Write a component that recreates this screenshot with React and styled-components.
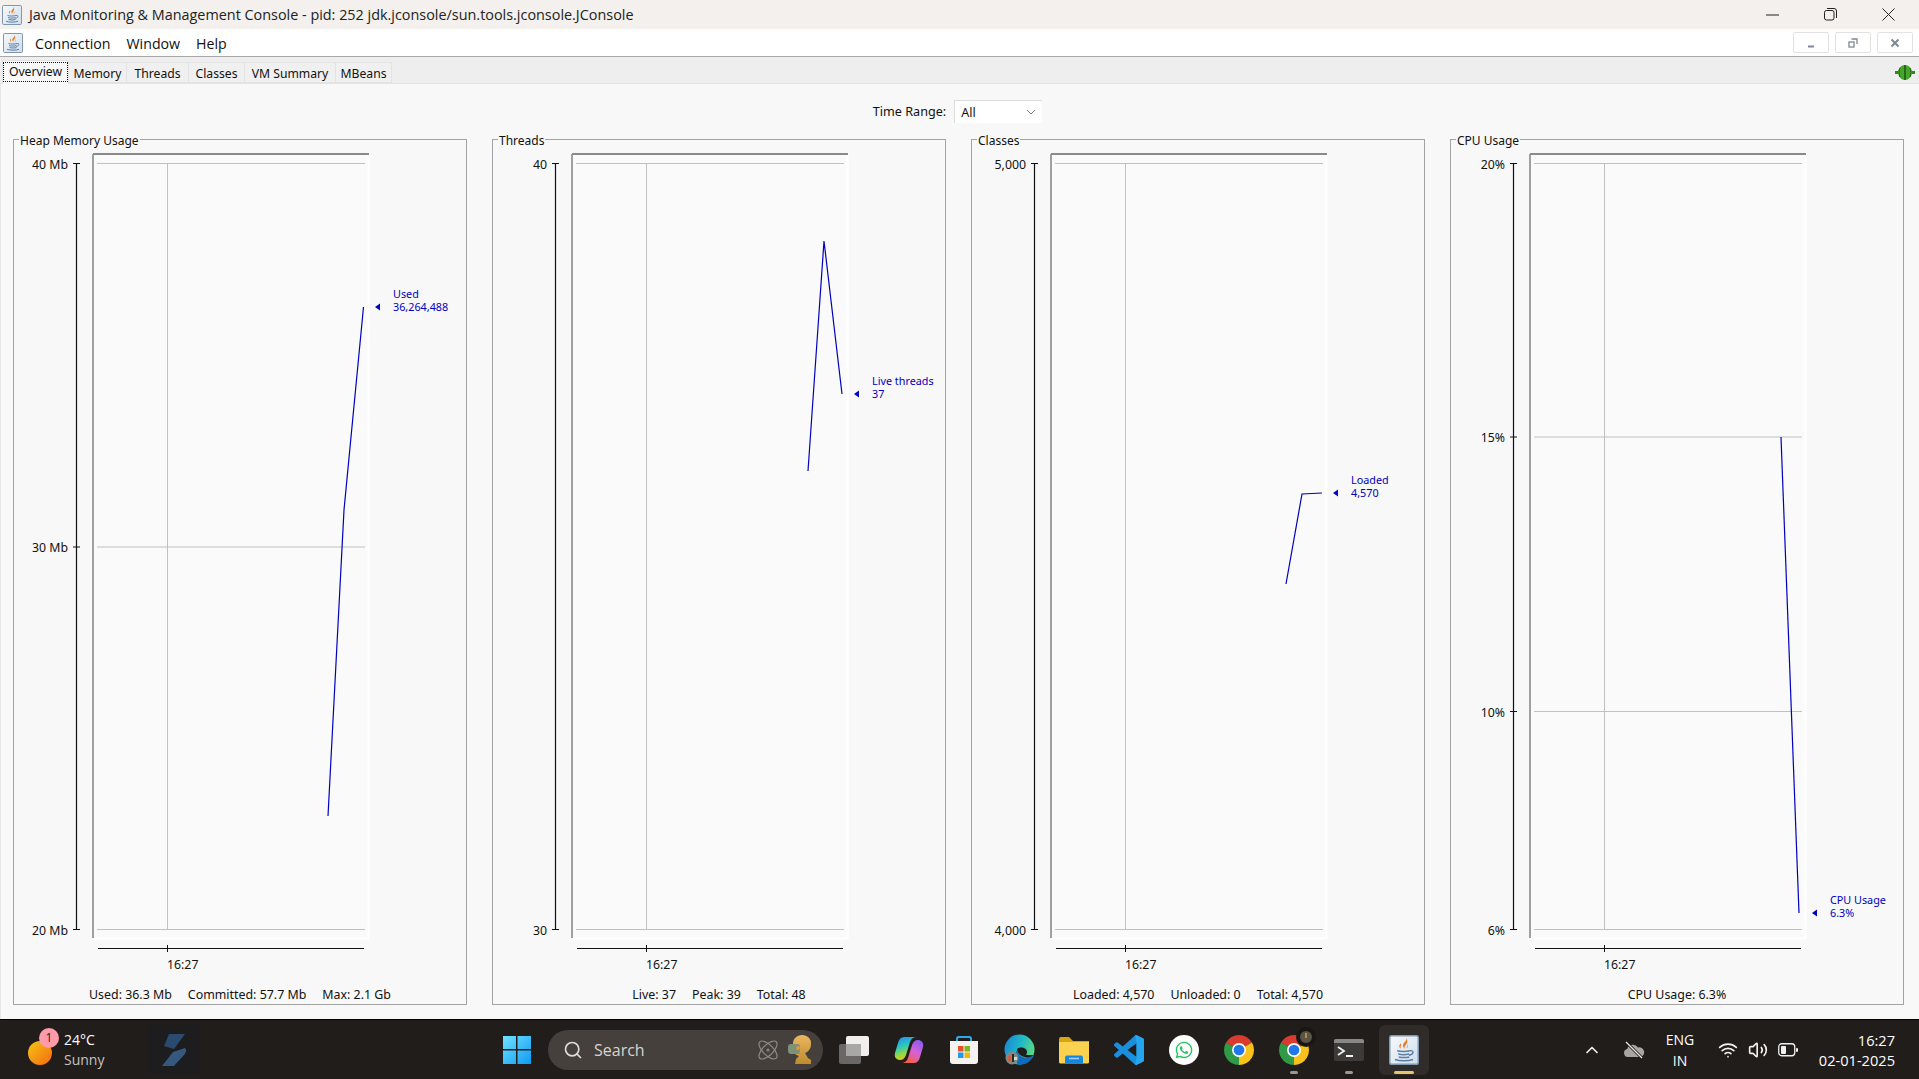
import React from 'react'
import styled, { createGlobalStyle } from 'styled-components'
import { ChevronUp, Wifi, Volume2, Search, Atom } from 'lucide-react'
import { FaWhatsapp } from 'react-icons/fa'

const swingFont = `"Noto Sans", "Liberation Sans", sans-serif`
const winFont = `"Open Sans", "Noto Sans", sans-serif`

const GlobalStyle = createGlobalStyle`
  html, body { margin: 0; padding: 0; height: 100%; overflow: hidden; }
  body { font-family: ${swingFont}; background: #f8f8f8; }
  #root { height: 100%; }
`

const Page = styled.div`
  display: flex;
  flex-direction: column;
  height: 1079px;
`

const TitleBar = styled.div`
  display: flex;
  align-items: center;
  height: 29px;
  flex-shrink: 0;
  padding: 0 2px;
  background: #f3f0ee;
  color: #222;
  font: 14.4px ${winFont};
`
const TitleText = styled.span`
  margin-left: 7px;
  flex: 1;
  white-space: nowrap;
`
const WindowButton = styled.div`
  display: flex;
  align-items: center;
  justify-content: center;
  width: 58px;
  height: 29px;
`

const MenuBar = styled.div`
  display: flex;
  align-items: center;
  height: 27px;
  flex-shrink: 0;
  padding-left: 3px;
  background: #fff;
  border-bottom: 1px solid #a8a8a8;
`
const MenuItem = styled.span`
  margin-left: ${(p) => p.$gap}px;
  padding-top: 1px;
  font: 14.2px ${winFont};
  color: #111;
`
const MdiButtons = styled.div`
  display: flex;
  gap: 6px;
  margin-left: auto;
  margin-right: 6px;
`
const MdiButton = styled.div`
  display: flex;
  align-items: center;
  justify-content: center;
  width: 36px;
  height: 21px;
  border: 1px solid #e2e2e2;
  border-radius: 2px;
  box-sizing: border-box;
`

const TabRow = styled.div`
  display: flex;
  align-items: flex-end;
  height: 27px;
  flex-shrink: 0;
  padding-left: 2px;
  background: #eeeeee;
  border-bottom: 1px solid #e3e3e3;
  box-sizing: border-box;
`
const Tab = styled.div`
  display: flex;
  align-items: center;
  justify-content: center;
  box-sizing: border-box;
  width: ${(p) => p.$width}px;
  height: ${(p) => (p.$active ? 24 : 21)}px;
  margin-bottom: ${(p) => (p.$active ? -1 : 0)}px;
  padding-top: ${(p) => (p.$active ? 0 : 2)}px;
  padding-bottom: ${(p) => (p.$active ? 2 : 0)}px;
  background: ${(p) => (p.$active ? '#f8f8f8' : '#f0f0f0')};
  border: 1px solid #e3e3e3;
  border-bottom: ${(p) => (p.$active ? 'none' : '1px solid #e3e3e3')};
  border-left: ${(p) => (p.$active ? '1px solid #e3e3e3' : 'none')};
  font-size: 12.2px;
  color: #111;
`
const TabFocus = styled.span`
  padding: 0 5px;
  line-height: 18px;
  outline: 1px dotted #111;
`
const ConnectionIcon = styled.svg`
  margin-left: auto;
  margin-right: 4px;
  margin-bottom: 3px;
`

const Content = styled.div`
  display: flex;
  flex-direction: column;
  flex: 1;
  min-height: 0;
  padding: 16px 17px 15px 12px;
  background: #f8f8f8;
  border-left: 1px solid #e8e8e8;
`
const RangeRow = styled.div`
  display: flex;
  align-items: center;
  justify-content: center;
  gap: 8px;
  height: 23px;
  margin-bottom: 16px;
  font-size: 12.6px;
  color: #111;
`
const Combo = styled.div`
  display: flex;
  align-items: center;
  justify-content: space-between;
  width: 88px;
  height: 23px;
  box-sizing: border-box;
  padding: 0 6px;
  background: #fff;
  border-top: 1px solid #dcdcdc;
  border-left: 1px solid #dcdcdc;
`

const PanelGrid = styled.div`
  display: grid;
  grid-template-columns: repeat(4, 1fr);
  gap: 25px;
  flex: 1;
  min-height: 0;
`
const Panel = styled.section`
  position: relative;
  display: flex;
  flex-direction: column;
  border: 1px solid #a3a3a3;
`
const PanelTitle = styled.span`
  position: absolute;
  top: -7px;
  left: 5px;
  padding: 0 1px;
  background: #f8f8f8;
  font-size: 12px;
  line-height: 16px;
  color: #111;
`
const ChartSvg = styled.svg`
  display: block;
  flex-shrink: 0;
`
const AxisText = styled.text`
  font: 12.3px ${swingFont};
  fill: #111;
`
const SeriesText = styled.text`
  font: 10.8px ${swingFont};
  fill: #0000c0;
`
const PanelFooter = styled.div`
  display: flex;
  justify-content: center;
  gap: 16px;
  margin-top: auto;
  height: 17px;
  line-height: 16px;
  font-size: 12.4px;
  color: #111;
`

const Taskbar = styled.div`
  display: flex;
  align-items: center;
  height: 60px;
  flex-shrink: 0;
  box-sizing: border-box;
  background: #211d1b;
  border-top: 1px solid #000;
  color: #fff;
  font-family: ${winFont};
`
const Weather = styled.div`
  position: relative;
  display: flex;
  align-items: center;
  margin-left: 28px;
  width: 119px;
  gap: 12px;
`
const Sun = styled.div`
  width: 24px;
  height: 24px;
  margin-top: 6px;
  border-radius: 50%;
  background: linear-gradient(135deg, #f5c518, #f46a0c);
`
const WeatherBadge = styled.div`
  position: absolute;
  left: 11px;
  top: -2px;
  width: 20px;
  height: 20px;
  border-radius: 50%;
  background: #ff9aa8;
  color: #222;
  font-size: 12px;
  line-height: 20px;
  text-align: center;
`
const WeatherText = styled.div`
  font-size: 14px;
  line-height: 20px;
  span { display: block; color: #c4c2c0; }
`
const PinnedApp = styled.div`
  display: flex;
  align-items: center;
  justify-content: center;
  width: 53px;
  height: 50px;
  border-radius: 6px;
  background: #1d1d20;
`
const CenterGroup = styled.div`
  display: flex;
  align-items: center;
  gap: 5px;
  margin-left: 292px;
`
const IconSlot = styled.div`
  position: relative;
  display: flex;
  align-items: center;
  justify-content: center;
  width: 50px;
  height: 50px;
  border-radius: 6px;
  background: ${(p) => (p.$active ? '#2f2c2a' : 'transparent')};
`
const RunDot = styled.div`
  position: absolute;
  bottom: 1px;
  left: 50%;
  transform: translateX(-50%);
  width: ${(p) => (p.$active ? 20 : 8)}px;
  height: 3px;
  border-radius: 2px;
  background: ${(p) => (p.$active ? '#e2c66d' : '#9a9896')};
`
const SearchBox = styled.div`
  display: flex;
  align-items: center;
  width: 275px;
  height: 40px;
  box-sizing: border-box;
  padding: 0 10px 0 15px;
  margin: 0 1px;
  border-radius: 20px;
  background: #45403c;
  color: #d6d4d2;
  font-size: 16px;
`
const SearchLabel = styled.span`
  margin-left: 11px;
  flex: 1;
`
const Avatar = styled.svg`
  margin-left: 7px;
`
const Tray = styled.div`
  display: flex;
  align-items: center;
  margin-left: auto;
  padding-right: 24px;
`
const TrayIcon = styled.div`
  display: flex;
  justify-content: center;
  width: ${(p) => p.$width}px;
  margin-right: ${(p) => p.$gap || 0}px;
`
const LangText = styled.div`
  width: 40px;
  margin-right: 18px;
  text-align: center;
  font-size: 14px;
  line-height: 21px;
`
const Clock = styled.div`
  width: 81px;
  margin-left: 16px;
  text-align: right;
  font-size: 14.6px;
  line-height: 20px;
  white-space: nowrap;
`

const JavaIcon = ({ size = 20, id = 'jv' }) => (
  <svg width={size} height={size} viewBox="0 0 20 20">
    <defs>
      <linearGradient id={id} x1="0" y1="0" x2="1" y2="1">
        <stop offset="0" stopColor="#f6f9fc" />
        <stop offset="1" stopColor="#cfdeec" />
      </linearGradient>
    </defs>
    <rect x="0.5" y="0.5" width="19" height="19" rx="1.2" fill={`url(#${id})`} stroke="#7f97b0" />
    <path d="M11.500 1.800c1.200 2.200-3 3.400-2 6 .3.8 1 1.400 1 1.400-1.200-2.400 3.400-3.400 1-7.400z" fill="#e8761a" />
    <path d="M8 5.500c-1.200 1-1.600 2.500-.2 3.600-.4-1.200.4-2.400.2-3.600z" fill="#e8761a" />
    <path d="M11.500 6c1.200.8.600 2.200 0 3 1.200-.6 1.600-2 0-3z" fill="#e8761a" />
    <path d="M5.500 10.500c2 .7 6.500.7 8.500 0M6 12.600c2 .6 5.500.6 7.500 0M6.500 14.600c2 .5 5 .5 7 0M4 16.300c3 1.100 9 1.100 12 0" fill="none" stroke="#5a7ea3" strokeWidth="1" />
    <path d="M14 10.500c2.800-.5 2.800 2.300-.8 3" fill="none" stroke="#5a7ea3" strokeWidth="0.9" />
  </svg>
)

const WinLogo = () => (
  <svg width="30" height="30" viewBox="0 0 30 30">
    <defs>
      <linearGradient id="wl" x1="0" y1="0" x2="1" y2="1">
        <stop offset="0" stopColor="#6fe2ff" />
        <stop offset="1" stopColor="#0f9bf2" />
      </linearGradient>
    </defs>
    <path d="M1 1h13v13H1zM15.500 1H29v13H15.500zM1 15.500h13V29H1zM15.500 15.500H29V29H15.500z" fill="url(#wl)" />
  </svg>
)

const TaskViewIcon = () => (
  <svg width="32" height="30" viewBox="0 0 32 30">
    <rect x="1" y="9" width="22" height="20" rx="2" fill="#6a6866" />
    <rect x="8" y="1" width="23" height="20" rx="2" fill="#f0efee" />
    <rect x="8" y="9" width="15" height="12" fill="#a9a7a5" />
  </svg>
)

const CopilotIcon = () => (
  <svg width="30" height="28" viewBox="0 0 30 28">
    <defs>
      <linearGradient id="cp1" x1="0.2" y1="0" x2="0.5" y2="1">
        <stop offset="0" stopColor="#2a8cf0" />
        <stop offset="0.4" stopColor="#28c8c0" />
        <stop offset="0.75" stopColor="#9ad83c" />
        <stop offset="1" stopColor="#f8b818" />
      </linearGradient>
      <linearGradient id="cp2" x1="0.8" y1="0" x2="0.3" y2="1">
        <stop offset="0" stopColor="#8a5cf0" />
        <stop offset="0.5" stopColor="#d860d8" />
        <stop offset="1" stopColor="#f4603c" />
      </linearGradient>
    </defs>
    <path d="M10 1h12c-3 .5-5 2-6 5l-4 13c-1 3-3 5-6 5H5c-3-1-5-3-4-7l3-10c1-4 3-6 6-6z" fill="url(#cp1)" />
    <path d="M20 27H8c3-.5 5-2 6-5l4-13c1-3 3-5 6-5h1c3 1 5 3 4 7l-3 10c-1 4-3 6-6 6z" fill="url(#cp2)" />
  </svg>
)

const StoreIcon = () => (
  <svg width="30" height="30" viewBox="0 0 30 30">
    <path d="M8 7V3.500A1.500 1.500 0 0 1 9.500 2h11A1.500 1.500 0 0 1 22 3.500V7" fill="none" stroke="#2aa8ec" strokeWidth="2" />
    <path d="M1 6h28v20a3 3 0 0 1-3 3H4a3 3 0 0 1-3-3z" fill="#f4f3f2" />
    <path d="M9 11h5.500v5.500H9z" fill="#e8502a" />
    <path d="M15.500 11H21v5.500h-5.500z" fill="#7ab81e" />
    <path d="M9 17.500h5.500V23H9z" fill="#1e9ceb" />
    <path d="M15.500 17.500H21V23h-5.500z" fill="#f5b60c" />
  </svg>
)

const EdgeIcon = () => (
  <svg width="31" height="31" viewBox="0 0 31 31">
    <defs>
      <linearGradient id="eg1" x1="0" y1="0.3" x2="1" y2="0.6">
        <stop offset="0" stopColor="#1a8ad4" />
        <stop offset="0.5" stopColor="#1fb8c8" />
        <stop offset="1" stopColor="#5fdc7c" />
      </linearGradient>
    </defs>
    <circle cx="15.500" cy="15.500" r="15" fill="url(#eg1)" />
    <path d="M13 15c4-3 10-1 10 3 0 2-1 3-1 3h8.500c-1 1-4.500 3.500-8.500 2.500-4-1-9-3-9-8.500z" fill="#211d1b" />
    <path d="M14 30.500c6 1 13-2 16.500-10-4 3.500-8 3.500-10.500 3-4-1-6.500-3.500-7.500-7-2 4-1 11 1.500 14z" fill="#0e6cbc" />
    <circle cx="8" cy="24" r="6.500" fill="#7c8a82" />
    <path d="M4 22h3v5H4z" fill="#c8604c" />
    <path d="M8 20h2v8H8z" fill="#2a2a2a" />
    <path d="M10 23h3v3h-3z" fill="#e0d8c8" />
  </svg>
)

const FolderIcon = () => (
  <svg width="30" height="28" viewBox="0 0 30 28">
    <path d="M0 3a2 2 0 0 1 2-2h8l4 4h16v4H0z" fill="#dba50f" />
    <path d="M0 6h30v20a1.500 1.500 0 0 1-1.500 1.500h-27A1.500 1.500 0 0 1 0 26z" fill="#fbd24f" />
    <path d="M6 27.500v-6a2 2 0 0 1 2-2h14a2 2 0 0 1 2 2v6z" fill="#1787dc" />
    <path d="M10 22.500h10" stroke="#9fd6ff" strokeWidth="1.500" />
  </svg>
)

const VsCodeIcon = () => (
  <svg width="30" height="30" viewBox="0 0 24 24">
    <path d="M23.15 2.587L18.21.21a1.494 1.494 0 0 0-1.705.29l-9.46 8.63-4.12-3.128a.999.999 0 0 0-1.276.057L.327 7.261A1 1 0 0 0 .326 8.74L3.899 12 .326 15.26a1 1 0 0 0 .001 1.479L1.65 17.94a.999.999 0 0 0 1.276.057l4.12-3.128 9.46 8.63a1.492 1.492 0 0 0 1.704.29l4.942-2.377A1.5 1.5 0 0 0 24 20.06V3.939a1.5 1.5 0 0 0-.85-1.352zm-5.146 14.861L10.826 12l7.178-5.448v10.896z" fill="#1a8fdc" />
    <path d="M17 .1c.4-.1.9 0 1.210.11l4.94 2.377A1.5 1.5 0 0 1 24 3.939V20.060a1.500 1.500 0 0 1-.85 1.353l-4.940 2.377c-.4.15-.8.2-1.210.1l1-6.440V6.550z" fill="#24a5f0" />
  </svg>
)

const WhatsAppIcon = () => (
  <svg width="30" height="30" viewBox="0 0 30 30">
    <circle cx="15" cy="15" r="15" fill="#fff" />
    <g transform="translate(5.500 5.500)">
      <FaWhatsapp size={19} color="#25c35f" />
    </g>
  </svg>
)

const ChromeIcon = () => (
  <svg width="30" height="30" viewBox="0 0 28 28">
    <path d="M14 14L1.880 7A14 14 0 0 1 26.120 7Z" fill="#db3a2e" />
    <path d="M14 14L26.120 7A14 14 0 0 1 14 28Z" fill="#f8c21a" />
    <path d="M14 14L14 28A14 14 0 0 1 1.880 7Z" fill="#2f9b47" />
    <circle cx="14" cy="14" r="6.500" fill="#fff" />
    <circle cx="14" cy="14" r="5" fill="#1f78e8" />
  </svg>
)

const ChromeBadge = styled.svg`
  position: absolute;
  top: 2px;
  right: 3px;
`

const TerminalIcon = () => (
  <svg width="30" height="22" viewBox="0 0 30 22">
    <rect width="30" height="22" rx="2" fill="#3c3b3a" />
    <path d="M0 2a2 2 0 0 1 2-2h26a2 2 0 0 1 2 2v2H0z" fill="#8a8886" />
    <path d="M4 8l6 4-6 4" fill="none" stroke="#f2f2f2" strokeWidth="1.800" />
    <path d="M12 17h7" stroke="#f2f2f2" strokeWidth="2" />
  </svg>
)

const BatteryIcon = () => (
  <svg width="20" height="14" viewBox="0 0 20 14">
    <rect x="0.750" y="0.750" width="16" height="12" rx="3" fill="none" stroke="#f0f0f0" strokeWidth="1.300" />
    <rect x="3" y="3" width="5" height="8" rx="1" fill="#f0f0f0" />
    <rect x="18" y="5" width="2" height="4" rx="1" fill="#f0f0f0" />
  </svg>
)

const CloudSlashIcon = () => (
  <svg width="22" height="18" viewBox="0 0 22 18">
    <path d="M5 16a4 4 0 0 1-.8-7.900A6 6 0 0 1 15 6.500a4.800 4.800 0 0 1 2.500 9.500z" fill="#a8a6a4" />
    <path d="M3 1l16 16" stroke="#211d1b" strokeWidth="3" />
    <path d="M3 1l16 16" stroke="#e8e8e8" strokeWidth="1.200" />
  </svg>
)

const PLOT = { left: 79, right: 354, top: 14, bottom: 798, gridLeft: 83, gridRight: 351, axisX: 62.5 }
const GRID_TOP = 23.5
const GRID_BOTTOM = 789.5

const panels = [
  {
    title: 'Heap Memory Usage',
    ticks: [['40 Mb', 23.5], ['30 Mb', 407], ['20 Mb', 789.5]],
    line: '314,676 330,370 349.5,167',
    markerY: 167,
    series: ['Used', '36,264,488'],
    footer: ['Used: 36.3 Mb', 'Committed: 57.7 Mb', 'Max: 2.1 Gb'],
  },
  {
    title: 'Threads',
    ticks: [['40', 23.5], ['30', 789.5]],
    line: '315,331 331,101 349,254',
    markerY: 254,
    series: ['Live threads', '37'],
    footer: ['Live: 37', 'Peak: 39', 'Total: 48'],
  },
  {
    title: 'Classes',
    ticks: [['5,000', 23.5], ['4,000', 789.5]],
    line: '314,444 330,354 350,353',
    markerY: 353,
    series: ['Loaded', '4,570'],
    footer: ['Loaded: 4,570', 'Unloaded: 0', 'Total: 4,570'],
  },
  {
    title: 'CPU Usage',
    ticks: [['20%', 23.5], ['15%', 297], ['10%', 571.5], ['6%', 789.5]],
    line: '330,297 348,773',
    markerY: 773,
    series: ['CPU Usage', '6.3%'],
    footer: ['CPU Usage: 6.3%'],
  },
]

const Chart = ({ ticks, line, markerY, series }) => (
  <ChartSvg width="452" height="847" viewBox="0 0 452 847">
    <rect x={PLOT.left} y={PLOT.top} width={PLOT.right - PLOT.left} height={PLOT.bottom - PLOT.top} fill="#fafafa" />
    <path d={`M${PLOT.right + 0.5} ${PLOT.top}V${PLOT.bottom + 0.5}H${PLOT.left}`} fill="none" stroke="#fff" strokeWidth="2" />
    <path d={`M${PLOT.left} ${PLOT.bottom}V${PLOT.top}`} stroke="#a0a0a0" strokeWidth="2" />
    <path d={`M${PLOT.left} ${PLOT.top}H${PLOT.right + 1}`} stroke="#8a8a8a" strokeWidth="2" />

    {ticks.map(([, y]) => (
      <path key={y} d={`M${PLOT.gridLeft} ${y}H${PLOT.gridRight}`} stroke="#c0c0c0" />
    ))}
    <path d={`M153.500 ${GRID_TOP}V${GRID_BOTTOM}`} stroke="#c0c0c0" />

    <path d={`M${PLOT.axisX} ${GRID_TOP}V${GRID_BOTTOM}`} stroke="#111" strokeWidth="1.200" />
    {ticks.map(([label, y]) => (
      <g key={label}>
        <path d={`M59 ${y}H66`} stroke="#111" />
        <AxisText x="54" y={y + 5} textAnchor="end">{label}</AxisText>
      </g>
    ))}

    <path d="M84 808.500H350" stroke="#111" strokeWidth="1.200" />
    <path d="M153.500 805V812" stroke="#111" />
    <AxisText x="153" y="829">16:27</AxisText>

    <polyline points={line} fill="none" stroke="#0000c0" strokeWidth="1.200" />
    <path d={`M361 ${markerY}l5-3.500v7z`} fill="#0000c0" />
    <SeriesText x="379" y={markerY - 9}>{series[0]}</SeriesText>
    <SeriesText x="379" y={markerY + 4}>{series[1]}</SeriesText>
  </ChartSvg>
)

const tabs = [
  ['Memory', 58],
  ['Threads', 62],
  ['Classes', 56],
  ['VM Summary', 91],
  ['MBeans', 56],
]

const App = () => (
  <Page>
    <GlobalStyle />
    <TitleBar>
      <JavaIcon id="jv1" />
      <TitleText>Java Monitoring &amp; Management Console - pid: 252 jdk.jconsole/sun.tools.jconsole.JConsole</TitleText>
      <WindowButton>
        <svg width="13" height="2" viewBox="0 0 13 2"><path d="M0 1h13" stroke="#222" /></svg>
      </WindowButton>
      <WindowButton>
        <svg width="13" height="13" viewBox="0 0 13 13" fill="none" stroke="#222">
          <rect x="0.500" y="2.500" width="9.500" height="9.500" rx="2" />
          <path d="M3 .5h7a2.500 2.500 0 0 1 2.500 2.500v7" />
        </svg>
      </WindowButton>
      <WindowButton>
        <svg width="13" height="13" viewBox="0 0 13 13"><path d="M.5.5l12 12M12.500.5l-12 12" stroke="#222" /></svg>
      </WindowButton>
    </TitleBar>

    <MenuBar>
      <JavaIcon id="jv2" />
      <MenuItem $gap={12}>Connection</MenuItem>
      <MenuItem $gap={16}>Window</MenuItem>
      <MenuItem $gap={16}>Help</MenuItem>
      <MdiButtons>
        <MdiButton>
          <svg width="10" height="10" viewBox="0 0 10 10"><path d="M2 8.500h6" stroke="#7e8796" strokeWidth="2" /></svg>
        </MdiButton>
        <MdiButton>
          <svg width="10" height="10" viewBox="0 0 10 10" fill="none" stroke="#7e8796" strokeWidth="1.300">
            <rect x="1" y="4" width="5" height="5" />
            <path d="M3.500 1h5.500v5" />
          </svg>
        </MdiButton>
        <MdiButton>
          <svg width="10" height="10" viewBox="0 0 10 10"><path d="M1.500 1.500l7 7M8.500 1.500l-7 7" stroke="#7e8796" strokeWidth="2" /></svg>
        </MdiButton>
      </MdiButtons>
    </MenuBar>

    <TabRow>
      <Tab $active $width={67}>
        <TabFocus>Overview</TabFocus>
      </Tab>
      {tabs.map(([name, width]) => (
        <Tab key={name} $width={width}>{name}</Tab>
      ))}
      <ConnectionIcon width="20" height="15" viewBox="0 0 20 15">
        <path d="M0 6h4v3H0zM16 6h4v3h-4z" fill="#2f8a1a" />
        <ellipse cx="10" cy="7.500" rx="7" ry="7.500" fill="#46a62c" />
        <path d="M10 0v15" stroke="#123c0c" strokeWidth="1.200" />
        <path d="M5 3c-1 3-1 6 0 9M15 3c1 3 1 6 0 9" stroke="#1e6a12" fill="none" />
      </ConnectionIcon>
    </TabRow>

    <Content>
      <RangeRow>
        <span>Time Range:</span>
        <Combo>
          <span>All</span>
          <svg width="10" height="6" viewBox="0 0 10 6"><path d="M1 1l4 4 4-4" fill="none" stroke="#777" /></svg>
        </Combo>
      </RangeRow>
      <PanelGrid>
        {panels.map((panel) => (
          <Panel key={panel.title}>
            <PanelTitle>{panel.title}</PanelTitle>
            <Chart {...panel} />
            <PanelFooter>
              {panel.footer.map((item) => <span key={item}>{item}</span>)}
            </PanelFooter>
          </Panel>
        ))}
      </PanelGrid>
    </Content>

    <Taskbar>
      <Weather>
        <Sun />
        <WeatherBadge>1</WeatherBadge>
        <WeatherText>24°C<span>Sunny</span></WeatherText>
      </Weather>
      <PinnedApp>
        <svg width="26" height="34" viewBox="0 0 26 34">
          <path d="M8 1h16L13 16 3 13z" fill="#2a4a6e" />
          <path d="M13 33H1l11-14 12-4c2 2 1 5-1 7z" fill="#34587e" />
        </svg>
      </PinnedApp>
      <CenterGroup>
        <IconSlot><WinLogo /></IconSlot>
        <SearchBox>
          <Search size={20} color="#dedcda" />
          <SearchLabel>Search</SearchLabel>
          <Atom size={24} color="#8a8a80" strokeWidth={1.2} />
          <Avatar width="26" height="32" viewBox="0 0 26 32">
            <defs>
              <linearGradient id="av" x1="0" y1="0" x2="0" y2="1">
                <stop offset="0" stopColor="#e8b860" />
                <stop offset="1" stopColor="#c08a30" />
              </linearGradient>
            </defs>
            <path d="M6 8a9 8 0 0 1 18 2c0 5-3 8-6 9l3 5 3 2v4H8l1-5 3-3c-4-1-6-4-6-7z" fill="url(#av)" />
            <rect x="1" y="10" width="12" height="10" rx="3" fill="#7e9078" />
            <circle cx="11" cy="14" r="2" fill="#d89a3c" />
          </Avatar>
        </SearchBox>
        <IconSlot><TaskViewIcon /></IconSlot>
        <IconSlot><CopilotIcon /></IconSlot>
        <IconSlot><StoreIcon /></IconSlot>
        <IconSlot><EdgeIcon /></IconSlot>
        <IconSlot><FolderIcon /></IconSlot>
        <IconSlot><VsCodeIcon /></IconSlot>
        <IconSlot><WhatsAppIcon /></IconSlot>
        <IconSlot><ChromeIcon /></IconSlot>
        <IconSlot>
          <ChromeIcon />
          <ChromeBadge width="20" height="20" viewBox="0 0 20 20">
            <circle cx="10" cy="10" r="10" fill="#191714" />
            <circle cx="10" cy="10" r="6" fill="#5a5446" />
            <path d="M10 6v5" stroke="#d0a040" strokeWidth="1.500" />
          </ChromeBadge>
          <RunDot />
        </IconSlot>
        <IconSlot><TerminalIcon /><RunDot /></IconSlot>
        <IconSlot $active>
          <JavaIcon size={30} id="jv3" />
          <RunDot $active />
        </IconSlot>
      </CenterGroup>
      <Tray>
        <TrayIcon $width={20} $gap={21}><ChevronUp size={20} color="#f0f0f0" /></TrayIcon>
        <TrayIcon $width={22} $gap={15}><CloudSlashIcon /></TrayIcon>
        <LangText>ENG<br />IN</LangText>
        <TrayIcon $width={20} $gap={10}><Wifi size={20} color="#f0f0f0" /></TrayIcon>
        <TrayIcon $width={20} $gap={10}><Volume2 size={20} color="#f0f0f0" /></TrayIcon>
        <TrayIcon $width={20}><BatteryIcon /></TrayIcon>
        <Clock>16:27<br />02-01-2025</Clock>
      </Tray>
    </Taskbar>
  </Page>
)

export default App
